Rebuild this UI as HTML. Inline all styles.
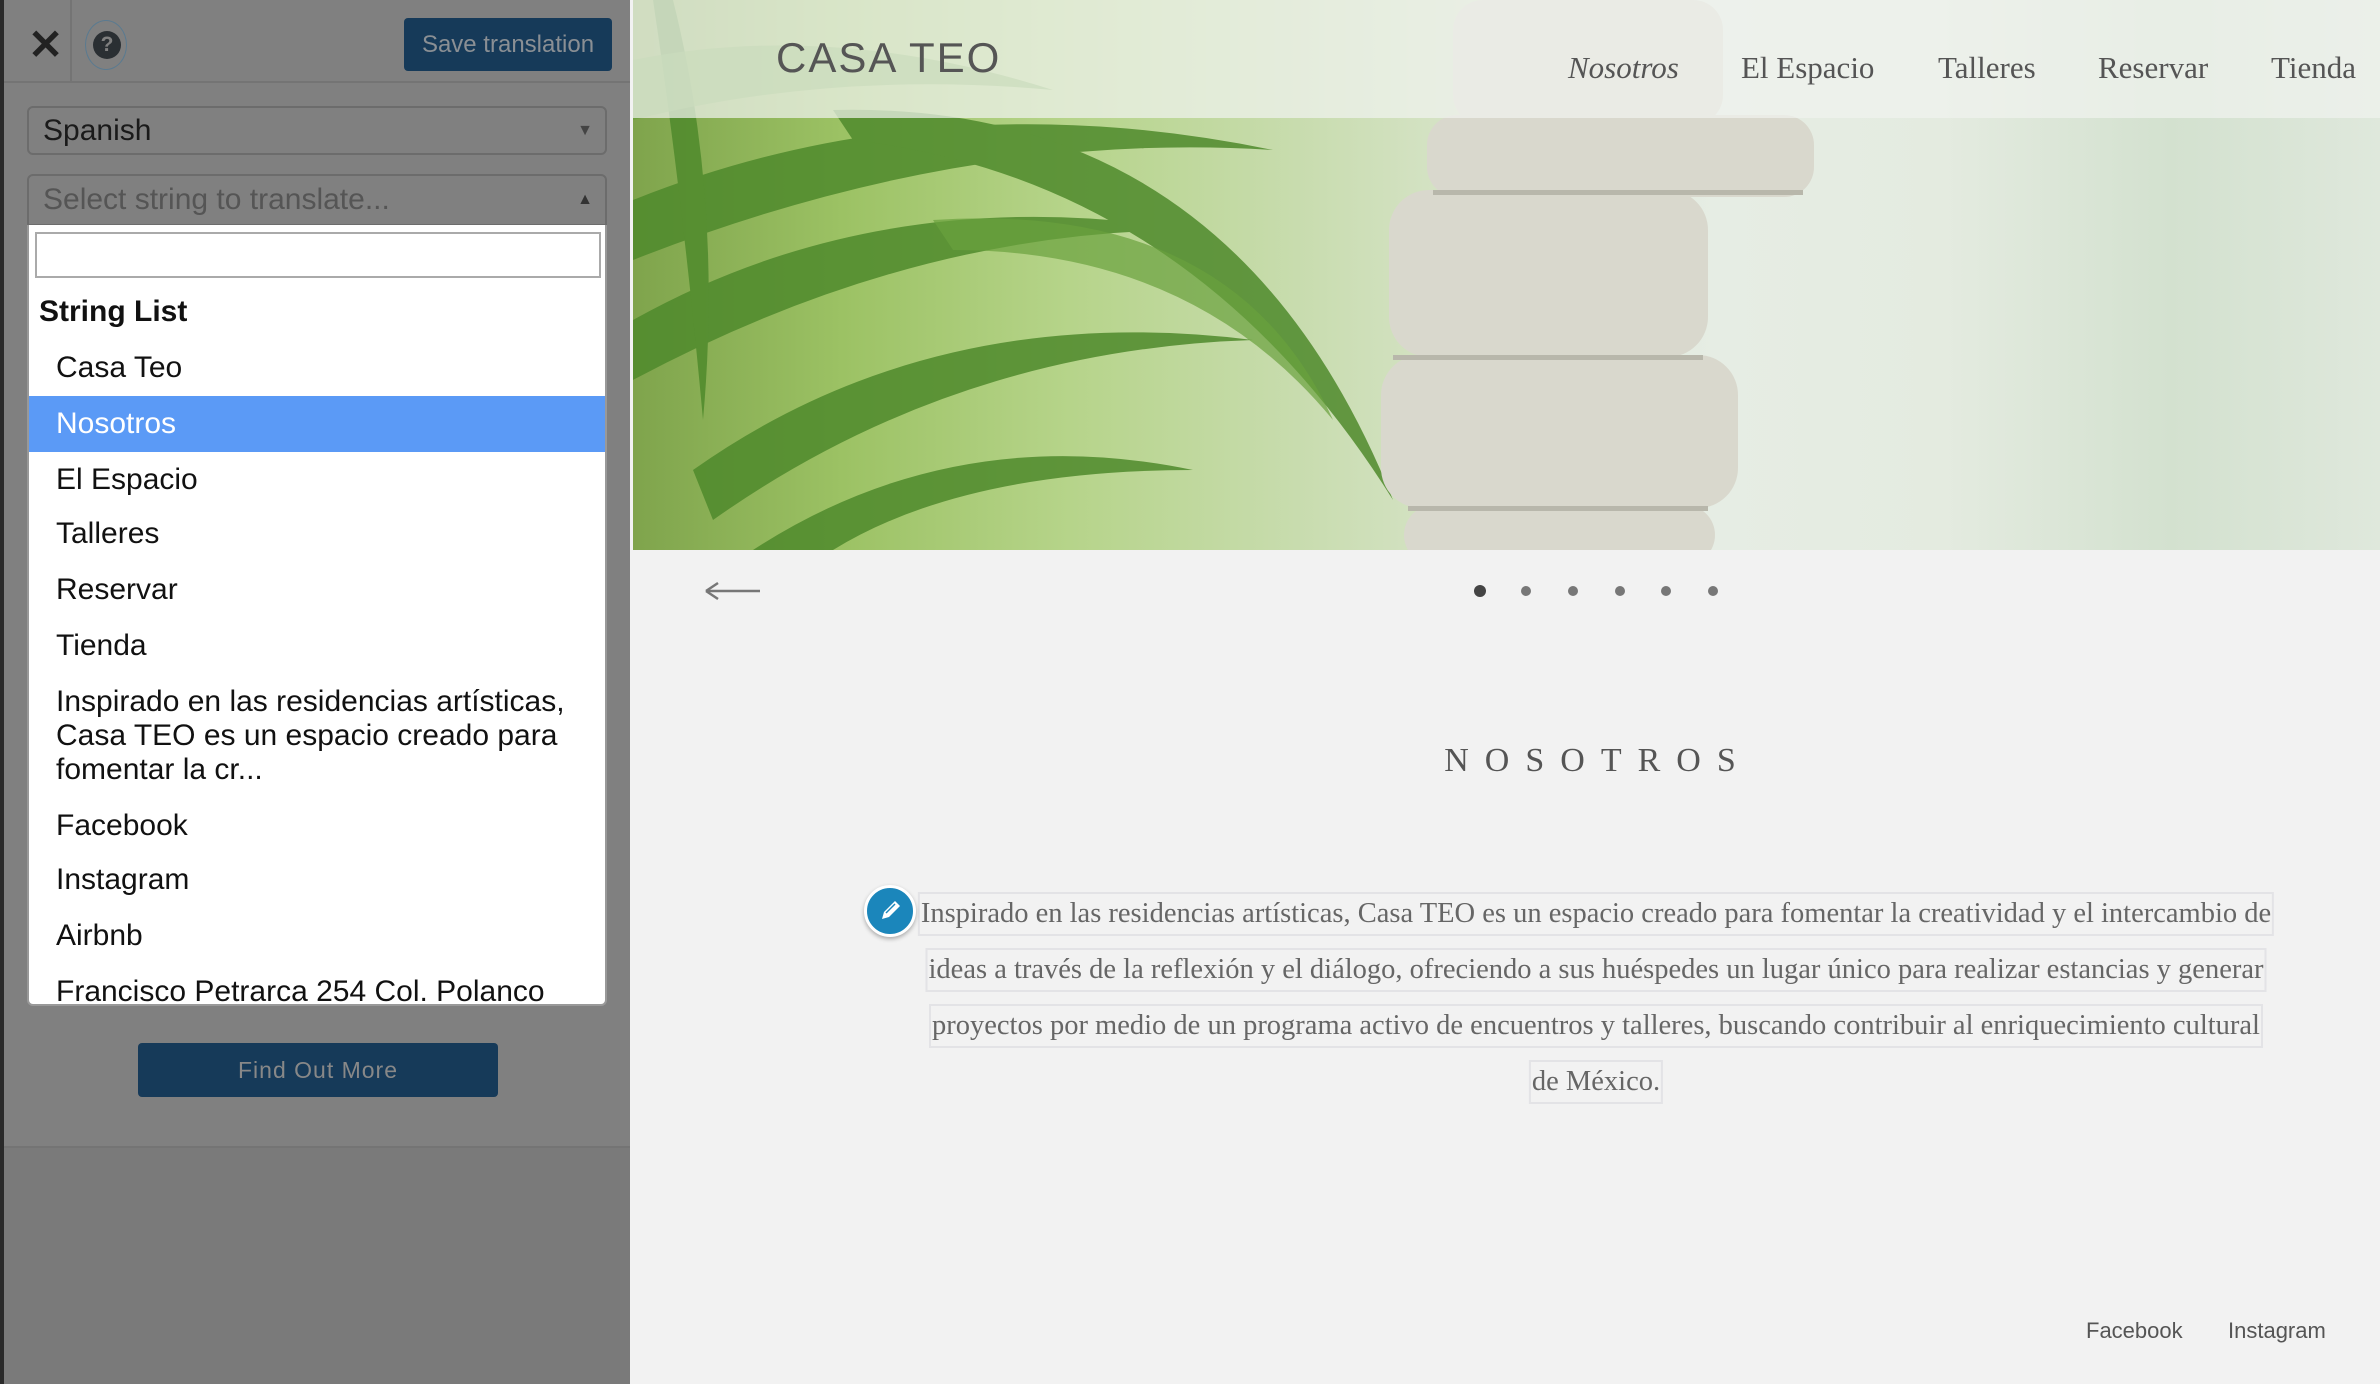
<!DOCTYPE html>
<html><head><meta charset="utf-8"><style>
*{margin:0;padding:0;box-sizing:border-box}
body{width:2380px;height:1384px;overflow:hidden;position:relative;background:#f2f2f2;font-family:"Liberation Sans",sans-serif}
.abs{position:absolute}
#panel{left:0;top:0;width:630px;height:1384px;background:#808080;border-left:4px solid #2a2a2a}
.item{position:absolute;left:27px;font-size:30px;color:#111;white-space:nowrap}
.nav{position:absolute;top:50px;font-family:"Liberation Serif",serif;font-size:31px;color:#555}
.pl{position:absolute;white-space:nowrap;font-family:"Liberation Serif",serif;font-size:28.5px;color:#666;border:2px solid #e3e3e6;padding:0 1px;line-height:40px;transform:translateX(-50%)}
</style></head><body>
<!-- hero -->
<div class="abs" style="left:633px;top:0;width:1747px;height:550px;overflow:hidden;background:linear-gradient(90deg,#7fa44c 0%,#9cc264 12%,#b6d48a 25%,#c8dcae 38%,#dde7d4 52%,#e6ede4 62%,#e4ebe0 75%,#d3e1cf 88%,#dfe8dc 100%)">
<svg width="1747" height="550" viewBox="0 0 1747 550" style="position:absolute;left:0;top:0">
<g fill="#4f8a2c" opacity="0.85">
<path d="M0 200 Q300 80 640 150 Q330 130 0 260Z"/>
<path d="M0 320 Q250 180 560 230 Q280 230 0 380Z"/>
<path d="M60 470 Q300 300 620 340 Q320 350 80 520Z"/>
<path d="M120 550 Q320 420 560 470 Q330 470 200 550Z"/>
<path d="M40 0 Q90 200 70 420 Q50 200 20 0Z"/>
<path d="M200 110 Q600 100 760 500 Q560 180 220 140Z"/>
</g>
<g fill="#6aa13d" opacity="0.7">
<path d="M0 60 Q200 20 420 90 Q200 70 0 120Z"/>
<path d="M300 220 Q600 200 700 420 Q560 250 320 250Z"/>
</g>
<g fill="#d9d8cd">
<rect x="820" y="0" width="270" height="125" rx="30"/>
<rect x="794" y="115" width="387" height="82" rx="30"/>
<rect x="756" y="190" width="319" height="167" rx="40"/>
<rect x="748" y="355" width="357" height="153" rx="40"/>
<rect x="771" y="505" width="311" height="60" rx="30"/>
</g>
<g fill="#b8b7ab"><rect x="800" y="190" width="370" height="5"/><rect x="760" y="355" width="310" height="5"/><rect x="775" y="506" width="300" height="5"/></g>
</svg>
<div class="abs" style="left:0;top:0;width:1747px;height:118px;background:rgba(240,242,238,0.72)"></div>
</div>
<div class="abs" style="left:776px;top:34px;font-size:42px;color:#555;letter-spacing:2px">CASA TEO</div>
<div class="nav" style="left:1568px;font-style:italic">Nosotros</div>
<div class="nav" style="left:1741px">El Espacio</div>
<div class="nav" style="left:1938px">Talleres</div>
<div class="nav" style="left:2098px">Reservar</div>
<div class="nav" style="left:2271px">Tienda</div>
<!-- arrow & dots -->
<svg class="abs" style="left:700px;top:579px" width="64" height="24"><path d="M6 12H60" stroke="#777" stroke-width="2.5"/><path d="M6 12L18 4M6 12L18 20" stroke="#777" stroke-width="2.5" fill="none"/></svg>
<div class="abs" style="left:1474px;top:585px;width:12px;height:12px;border-radius:50%;background:#444"></div>
<div class="abs" style="left:1521px;top:586px;width:10px;height:10px;border-radius:50%;background:#777"></div>
<div class="abs" style="left:1568px;top:586px;width:10px;height:10px;border-radius:50%;background:#777"></div>
<div class="abs" style="left:1615px;top:586px;width:10px;height:10px;border-radius:50%;background:#777"></div>
<div class="abs" style="left:1661px;top:586px;width:10px;height:10px;border-radius:50%;background:#777"></div>
<div class="abs" style="left:1708px;top:586px;width:10px;height:10px;border-radius:50%;background:#777"></div>
<div class="abs" style="left:1598px;top:742px;transform:translateX(-50%);font-family:'Liberation Serif',serif;font-size:34px;color:#555;letter-spacing:16px;white-space:nowrap">NOSOTROS</div>
<div class="pl" style="left:1596px;top:892px">Inspirado en las residencias artísticas, Casa TEO es un espacio creado para fomentar la creatividad y el intercambio de</div>
<div class="pl" style="left:1596px;top:948px">ideas a través de la reflexión y el diálogo, ofreciendo a sus huéspedes un lugar único para realizar estancias y generar</div>
<div class="pl" style="left:1596px;top:1004px">proyectos por medio de un programa activo de encuentros y talleres, buscando contribuir al enriquecimiento cultural</div>
<div class="pl" style="left:1596px;top:1060px">de México.</div>
<div class="abs" style="left:864px;top:885px;width:52px;height:52px;border-radius:50%;background:#1b86bb;border:3px solid #fff;box-shadow:0 2px 4px rgba(0,0,0,.3)">
<svg width="46" height="46" viewBox="0 0 46 46"><path d="M15 31l2-7 11-11 5 5-11 11z" fill="#fff"/><path d="M19 25l9-9" stroke="#1b86bb" stroke-width="1.5"/></svg></div>
<div class="abs" style="left:2086px;top:1318px;font-size:22px;color:#555">Facebook</div>
<div class="abs" style="left:2228px;top:1318px;font-size:22px;color:#555">Instagram</div>
<!-- panel -->
<div id="panel" class="abs">
<div class="abs" style="left:0;top:0;width:626px;height:83px;border-bottom:2px solid #747474"></div>
<div class="abs" style="left:66px;top:0;width:2px;height:83px;background:#747474"></div>
<div class="abs" style="left:24px;top:20px;font-size:42px;font-weight:bold;color:#222">✕</div>
<div class="abs" style="left:81px;top:20px;width:42px;height:50px;border-radius:50%;border:1px solid #5a7a90"></div>
<div class="abs" style="left:89px;top:31px;width:28px;height:28px;border-radius:50%;background:#2a2f33;color:#808080;font-weight:bold;font-size:21px;text-align:center;line-height:28px">?</div>
<div class="abs" style="left:400px;top:18px;width:208px;height:53px;background:#163a59;border-radius:4px;color:#8a8f94;font-size:24px;text-align:center;line-height:53px">Save translation</div>
<div class="abs" style="left:23px;top:106px;width:580px;height:49px;border:2px solid #6c6c6c;border-radius:6px;font-size:30px;color:#1a1a1a;line-height:45px;padding-left:14px;background:#808080">Spanish<span style="position:absolute;right:12px;top:0;font-size:16px;color:#444">▼</span></div>
<div class="abs" style="left:23px;top:174px;width:580px;height:52px;border:2px solid #6c6c6c;border-radius:6px 6px 0 0;font-size:30px;color:#555;line-height:48px;padding-left:14px">Select string to translate...<span style="position:absolute;right:12px;top:0;font-size:16px;color:#333">▲</span></div>
<div class="abs" style="left:0;top:1146px;width:626px;height:238px;background:#7a7a7a;border-top:2px solid #747474"></div>
<div class="abs" style="left:134px;top:1043px;width:360px;height:54px;background:#163a59;border-radius:4px;color:#888;font-size:23px;text-align:center;line-height:54px;letter-spacing:1px">Find Out More</div>
<div class="abs" style="left:23px;top:225px;width:580px;height:781px;background:#fff;border:2px solid #999;border-top:none;border-radius:0 0 6px 6px;overflow:hidden">
<div class="abs" style="left:6px;top:7px;width:566px;height:46px;border:2px solid #aaa"></div>
<div class="abs" style="left:10px;top:70px;font-size:30px;font-weight:bold;color:#111">String List</div>
<div class="abs" style="left:0;top:171px;width:580px;height:56px;background:#5b9af6"></div>
<div class="item" style="top:126px">Casa Teo</div>
<div class="item" style="top:182px;color:#fff">Nosotros</div>
<div class="item" style="top:238px">El Espacio</div>
<div class="item" style="top:292px">Talleres</div>
<div class="item" style="top:348px">Reservar</div>
<div class="item" style="top:404px">Tienda</div>
<div class="item" style="top:460px;line-height:34px">Inspirado en las residencias artísticas,<br>Casa TEO es un espacio creado para<br>fomentar la cr...</div>
<div class="item" style="top:584px">Facebook</div>
<div class="item" style="top:638px">Instagram</div>
<div class="item" style="top:694px">Airbnb</div>
<div class="item" style="top:750px">Francisco Petrarca 254 Col. Polanco</div>
</div>
</div>
</body></html>
